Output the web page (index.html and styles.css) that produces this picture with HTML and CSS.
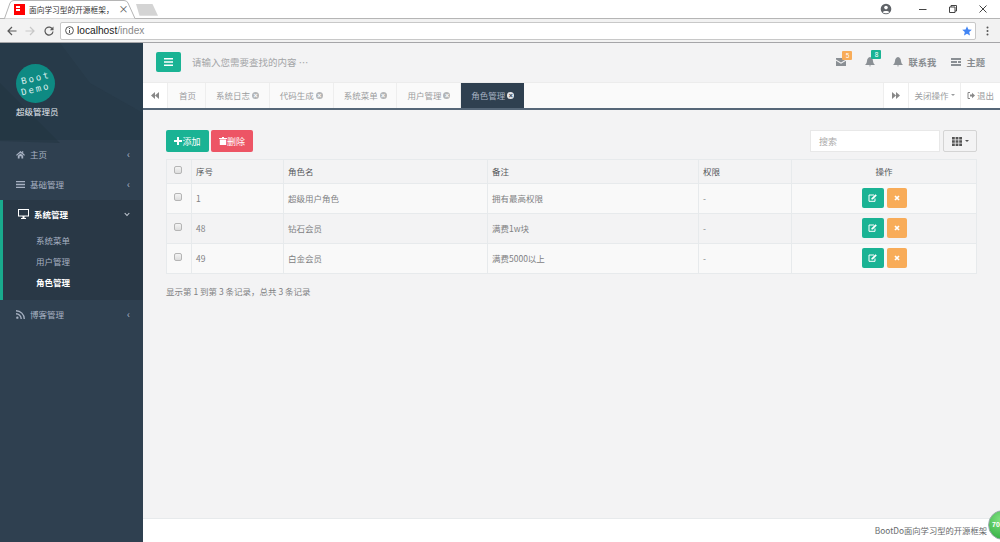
FILE: index.html
```html
<!DOCTYPE html>
<html lang="zh">
<head>
<meta charset="utf-8">
<title>BootDo</title>
<link rel="stylesheet" href="styles.css">
</head>
<body>
<div class="browser">
  <div class="tabstrip">
    <svg class="tab-shape" width="160" height="19" viewBox="0 0 160 19"><path d="M0 18.500H4.500L10 3Q11 .5 14 .5H124Q127 .5 128 3L135 18.500" fill="#fff" stroke="#b5b5b5"/><path d="M136 4H152.500L158 15.700H139.500Z" fill="#d4d4d4"/></svg>
    <div class="favicon"><i></i></div>
    <span class="tab-title">面向学习型的开源框架，</span>
    <span class="tab-close">×</span>
    <div class="winctl">
      <svg class="ico-user" width="12" height="12" viewBox="0 0 12 12"><circle cx="6" cy="6" r="5.300" fill="#5f6368"/><circle cx="6" cy="4.600" r="1.800" fill="#fff"/><path d="M2.700 9.200C3.500 7.500 8.500 7.500 9.300 9.200 8 10.500 4 10.500 2.700 9.200Z" fill="#fff"/></svg>
      <svg class="ico-win" width="8" height="8" viewBox="0 0 8 8"><path d="M0 4.500H7.500" stroke="#444" fill="none"/></svg>
      <svg class="ico-win" width="8" height="8" viewBox="0 0 8 8"><path d="M.5 2H6V7.500H.5ZM2 2V.5H7.500V6H6" stroke="#444" fill="none"/></svg>
      <svg class="ico-win" width="8" height="8" viewBox="0 0 8 8"><path d="M.5.500L7.500 7.500M7.500.500L.5 7.500" stroke="#444" fill="none"/></svg>
    </div>
  </div>
  <div class="toolbar">
    <svg class="nav-ico" width="10" height="10" viewBox="0 0 10 10"><path d="M9.500 5H1M5 1L1 5L5 9" stroke="#5a5a5a" stroke-width="1.200" fill="none"/></svg>
    <svg class="nav-ico" width="10" height="10" viewBox="0 0 10 10"><path d="M.5 5H9M5 1L9 5L5 9" stroke="#c8c8c8" stroke-width="1.200" fill="none"/></svg>
    <svg class="nav-ico" width="10" height="10" viewBox="0 0 10 10"><path d="M8.700 3.500A4 4 0 1 0 9 5.500" stroke="#5a5a5a" stroke-width="1.200" fill="none"/><path d="M9.500.5V4.200H5.800Z" fill="#5a5a5a"/></svg>
    <div class="omnibox">
      <svg width="9" height="9" viewBox="0 0 9 9"><circle cx="4.500" cy="4.500" r="3.900" stroke="#555" fill="none"/><path d="M4.500 4V7M4.500 2V3" stroke="#555"/></svg>
      <span class="url"><b>localhost</b>/index</span>
      <svg class="star" width="10" height="10" viewBox="0 0 10 10"><path d="M5 .3L6.400 3.500 9.800 3.800 7.200 6.100 8 9.600 5 7.800 2 9.600 2.800 6.100 .2 3.800 3.600 3.500Z" fill="#4285f4"/></svg>
    </div>
    <svg class="menu-dots" width="3" height="10" viewBox="0 0 3 10"><circle cx="1.500" cy="1.500" r="1" fill="#555"/><circle cx="1.500" cy="5" r="1" fill="#555"/><circle cx="1.500" cy="8.500" r="1" fill="#555"/></svg>
  </div>
</div>

<div class="app">
  <aside class="sidebar">
    <svg class="side-deco" width="143" height="260" viewBox="0 0 143 260"><path d="M60 0H143V70L90 40Z" fill="#2c4050" opacity=".55"/><path d="M0 40L60 100 0 98Z" fill="#22333f" opacity=".5"/></svg>
    <div class="profile">
      <div class="logo"><span>Boot</span><span>Demo</span></div>
      <div class="role">超级管理员</div>
    </div>
    <nav class="nav">
      <a class="nav-item">
        <svg class="nav-i" width="9" height="9" viewBox="0 0 10 10"><path d="M5 1L0 5.500 1 6.500 5 3 9 6.500 10 5.500 8 3.700V1H7V2.800ZM2 6.500L5 4 8 6.500V9.500H6V7H4V9.500H2Z" fill="#a7b1c2"/></svg>
        <span>主页</span><em>‹</em>
      </a>
      <a class="nav-item">
        <svg class="nav-i" width="9" height="9" viewBox="0 0 10 10"><path d="M0 1H10V2.600H0ZM0 4.200H10V5.800H0ZM0 7.400H10V9H0Z" fill="#a7b1c2"/></svg>
        <span>基础管理</span><em>‹</em>
      </a>
      <div class="nav-group">
        <a class="nav-item active">
          <svg class="nav-i" width="11" height="10" viewBox="0 0 11 10"><path d="M0 0H11V7.500H6.500V9H8V10H3V9H4.500V7.500H0ZM1 1V6.500H10V1Z" fill="#fff"/></svg>
          <span>系统管理</span><svg class="chev" width="6" height="5" viewBox="0 0 6 5"><path d="M.7 1L3 3.500 5.300 1" stroke="#c5ccd6" stroke-width="1.100" fill="none"/></svg>
        </a>
        <a class="sub">系统菜单</a>
        <a class="sub">用户管理</a>
        <a class="sub current">角色管理</a>
      </div>
      <a class="nav-item">
        <svg class="nav-i" width="9" height="9" viewBox="0 0 10 10"><circle cx="1.500" cy="8.500" r="1.300" fill="#a7b1c2"/><path d="M0 4.200A5.800 5.800 0 0 1 5.800 10M0 .8A9.200 9.200 0 0 1 9.200 10" stroke="#a7b1c2" stroke-width="1.500" fill="none"/></svg>
        <span>博客管理</span><em>‹</em>
      </a>
    </nav>
  </aside>

  <main class="main">
    <header class="topbar">
      <button class="burger"><svg width="9" height="8" viewBox="0 0 9 8"><path d="M0 0H9V1.600H0ZM0 3.200H9V4.800H0ZM0 6.400H9V8H0Z" fill="#fff"/></svg></button>
      <span class="search-hint">请输入您需要查找的内容 …</span>
      <div class="top-actions">
        <div class="top-ico">
          <svg width="10" height="8" viewBox="0 0 10 8"><path d="M0 0H10V1.500L5 4.500 0 1.500ZM0 2.800L5 5.800 10 2.800V8H0Z" fill="#8a8f94"/></svg>
          <b class="badge orange">5</b>
        </div>
        <div class="top-ico">
          <svg width="10" height="10" viewBox="0 0 10 10"><path d="M5 0C7 .6 7.800 2 8 4 8.200 6 9 7 10 8H0C1 7 1.800 6 2 4 2.200 2 3 .6 5 0ZM4 8.500H6Q5 10.500 4 8.500Z" fill="#8a8f94"/></svg>
          <b class="badge green">8</b>
        </div>
        <div class="top-link">
          <svg width="10" height="10" viewBox="0 0 10 10"><path d="M5 0C7 .6 7.800 2 8 4 8.200 6 9 7 10 8H0C1 7 1.800 6 2 4 2.200 2 3 .6 5 0ZM4 8.500H6Q5 10.500 4 8.500Z" fill="#8a8f94"/></svg>
          <span>联系我</span>
        </div>
        <div class="top-link">
          <svg width="10" height="8" viewBox="0 0 10 8"><path d="M0 0H10V2H0ZM0 3H6V5H0ZM7 3H10V5H7ZM0 6H10V8H0Z" fill="#8a8f94"/></svg>
          <span>主题</span>
        </div>
      </div>
    </header>

    <div class="tabs">
      <div class="tab-btn arrow"><svg width="8" height="7" viewBox="0 0 8 7"><path d="M4 0V7L0 3.500ZM8 0V7L4 3.500Z" fill="#888"/></svg></div>
      <div class="page-tab">首页</div>
      <div class="page-tab">系统日志<i class="x">×</i></div>
      <div class="page-tab">代码生成<i class="x">×</i></div>
      <div class="page-tab">系统菜单<i class="x">×</i></div>
      <div class="page-tab">用户管理<i class="x">×</i></div>
      <div class="page-tab on">角色管理<i class="x">×</i></div>
      <div class="tab-spacer"></div>
      <div class="tab-btn arrow r"><svg width="8" height="7" viewBox="0 0 8 7"><path d="M0 0V7L4 3.500ZM4 0V7L8 3.500Z" fill="#888"/></svg></div>
      <div class="tab-btn close-ops">关闭操作<i class="caret"></i></div>
      <div class="tab-btn logout"><svg width="8" height="7" viewBox="0 0 8 7"><path d="M3 .5H1V6.500H3" stroke="#888" fill="none"/><path d="M3 2.500H5V.8L8 3.500 5 6.200V4.500H3Z" fill="#888"/></svg>退出</div>
    </div>

    <section class="content">
      <div class="table-tools">
        <button class="btn add"><svg width="8" height="8" viewBox="0 0 8 8"><path d="M3 0H5V3H8V5H5V8H3V5H0V3H3Z" fill="#fff"/></svg>添加</button>
        <button class="btn del"><svg width="8" height="8" viewBox="0 0 8 8"><path d="M3 0H5V1H8V2H0V1H3ZM.8 2.500H7.200V8H.8Z" fill="#fff"/></svg>删除</button>
        <div class="tools-right">
          <div class="search-box">搜索</div>
          <button class="cols"><svg width="10" height="9" viewBox="0 0 10 9"><path d="M0 0H2.800V2.500H0ZM3.600 0H6.400V2.500H3.600ZM7.200 0H10V2.500H7.200ZM0 3.250H2.800V5.750H0ZM3.600 3.250H6.400V5.750H3.600ZM7.200 3.250H10V5.750H7.200ZM0 6.500H2.800V9H0ZM3.600 6.500H6.400V9H3.600ZM7.200 6.500H10V9H7.200Z" fill="#555"/></svg><i class="caret dark"></i></button>
        </div>
      </div>
      <div class="grid-table">
        <div class="row head">
          <div class="cell"><i class="check"></i></div><div class="cell">序号</div><div class="cell">角色名</div><div class="cell">备注</div><div class="cell">权限</div><div class="cell center">操作</div>
        </div>
        <div class="row">
          <div class="cell"><i class="check"></i></div><div class="cell">1</div><div class="cell">超级用户角色</div><div class="cell">拥有最高权限</div><div class="cell">-</div>
          <div class="cell center"><button class="act edit"><svg width="9" height="8" viewBox="0 0 9 8"><path d="M6 1H1V7.300H7V4.500" stroke="#fff" fill="none"/><path d="M3.500 4.200L7.500.2 8.800 1.500 4.800 5.500H3.500Z" fill="#fff"/></svg></button><button class="act remove"><svg width="6" height="6" viewBox="0 0 6 6"><path d="M1 1L5 5M5 1L1 5" stroke="#fff" stroke-width="1.700"/></svg></button></div>
        </div>
        <div class="row alt">
          <div class="cell"><i class="check"></i></div><div class="cell">48</div><div class="cell">钻石会员</div><div class="cell">满费1w块</div><div class="cell">-</div>
          <div class="cell center"><button class="act edit"><svg width="9" height="8" viewBox="0 0 9 8"><path d="M6 1H1V7.300H7V4.500" stroke="#fff" fill="none"/><path d="M3.500 4.200L7.500.2 8.800 1.500 4.800 5.500H3.500Z" fill="#fff"/></svg></button><button class="act remove"><svg width="6" height="6" viewBox="0 0 6 6"><path d="M1 1L5 5M5 1L1 5" stroke="#fff" stroke-width="1.700"/></svg></button></div>
        </div>
        <div class="row">
          <div class="cell"><i class="check"></i></div><div class="cell">49</div><div class="cell">白金会员</div><div class="cell">满费5000以上</div><div class="cell">-</div>
          <div class="cell center"><button class="act edit"><svg width="9" height="8" viewBox="0 0 9 8"><path d="M6 1H1V7.300H7V4.500" stroke="#fff" fill="none"/><path d="M3.500 4.200L7.500.2 8.800 1.500 4.800 5.500H3.500Z" fill="#fff"/></svg></button><button class="act remove"><svg width="6" height="6" viewBox="0 0 6 6"><path d="M1 1L5 5M5 1L1 5" stroke="#fff" stroke-width="1.700"/></svg></button></div>
        </div>
      </div>
      <p class="summary">显示第 1 到第 3 条记录，总共 3 条记录</p>
    </section>

    <footer class="footer">BootDo面向学习型的开源框架</footer>
    <div class="speed">70</div>
  </main>
</div>
</body>
</html>
```
FILE: styles.css
```css
* { box-sizing: border-box; }
html, body { margin: 0; height: 100%; overflow: hidden; }
body {
  width: 1000px; height: 542px;
  font-family: "Noto Sans CJK SC", "Liberation Sans", sans-serif;
  font-size: 8.500px; color: #676a6c;
  display: flex; flex-direction: column;
  background: #f3f3f4;
}
svg { display: block; flex: none; }
button { border: 0; padding: 0; font: inherit; }

/* browser chrome */
.browser { height: 43px; flex: none; border-bottom: 1px solid #a5a5a8; background: #f2f2f2; }
.tabstrip { height: 19px; background: #fff; border-bottom: 1px solid #b5b5b5; position: relative; display: flex; align-items: center; padding-left: 14px; }
.tab-shape { position: absolute; left: 0; top: 0; }
.favicon { position: relative; width: 11px; height: 11px; background: #f00; }
.favicon i { position: absolute; left: 2px; top: 2px; width: 4px; height: 2px; background: #fff; box-shadow: 0 3px 0 #fff; }
.tab-title { position: relative; margin-left: 4px; font-size: 7.700px; color: #333; white-space: nowrap; }
.tab-close { position: relative; margin-left: 5px; font-size: 10px; line-height: 1; color: #555; }
.winctl { margin-left: auto; display: flex; align-items: center; gap: 22px; padding-right: 13px; }
.ico-user { margin-right: 5px; }
.toolbar { height: 23px; display: flex; align-items: center; padding-left: 7px; }
.nav-ico { margin-right: 8px; }
.nav-ico:nth-child(2) { margin-right: 9px; }
.nav-ico:nth-child(3) { margin-right: 6px; }
.omnibox { width: 916px; height: 18px; background: #fff; border: 1px solid #c8c8c8; border-radius: 2px; display: flex; align-items: center; padding: 0 3px 0 4px; gap: 3px; }
.url { font-family: "Liberation Sans", sans-serif; font-size: 10.200px; color: #8a8a8a; }
.url b { font-weight: 400; color: #222; }
.star { margin-left: auto; }
.menu-dots { margin-left: 10px; }

/* layout */
.app { flex: 1; display: flex; min-height: 0; }
.sidebar { width: 143px; flex: none; background: #2f4050; position: relative; overflow: hidden; }
.side-deco { position: absolute; left: 0; top: 0; }
.profile { height: 97px; background: #273a49; padding: 21px 0 0 16px; }
.logo { position: relative; width: 39px; height: 39px; border-radius: 50%; background: #0e8a83; color: #dcefee; font-family: "DejaVu Sans Mono", monospace; font-size: 9px; line-height: 11px; display: flex; flex-direction: column; align-items: center; justify-content: center; letter-spacing: 2px; }
.logo span { transform: rotate(-14deg); display: block; }
.role { position: relative; margin-top: 2px; color: #e6ebf2; font-size: 8.500px; line-height: 12px; }
.nav { position: relative; display: flex; flex-direction: column; }
.nav-item { height: 30px; display: flex; align-items: center; padding: 0 13px 2px 16px; color: #a7b1c2; gap: 5px; }
.nav-item em { margin-left: auto; font-style: normal; font-size: 10px; line-height: 1; }
.nav-group { background: #293846; border-left: 3px solid #19aa8d; height: 100px; }
.nav-item.active { height: 30px; color: #fff; font-weight: 700; padding-left: 15px; }
.chev { margin-left: auto; }
.sub { display: block; height: 21px; line-height: 21px; padding-left: 33px; color: #a7b1c2; }
.sub.current { color: #fff; font-weight: 700; }

.main { flex: 1; min-width: 0; display: flex; flex-direction: column; position: relative; }
.topbar { height: 39px; flex: none; display: flex; align-items: center; padding: 0 15px 2px 13px; background: #f3f3f4; }
.burger { width: 25px; height: 20px; background: #1ab394; border-radius: 2px; display: flex; align-items: center; justify-content: center; }
.search-hint { margin-left: 11px; font-size: 9.500px; color: #a3a5a7; }
.top-actions { margin-left: auto; display: flex; align-items: center; }
.top-ico { position: relative; margin-right: 19px; }
.top-ico:nth-child(2) { margin-right: 18px; }
.badge { position: absolute; left: 6px; top: -7px; min-width: 10px; height: 9px; padding: 0 2px; border-radius: 1px; color: #fff; font-size: 6.500px; font-weight: 400; line-height: 9px; text-align: center; font-family: "Liberation Sans", sans-serif; }
.orange { background: #f8ac59; }
.green { background: #1ab394; }
.top-link { display: flex; align-items: center; gap: 5px; font-size: 9.300px; font-weight: 700; color: #888c90; }
.top-link:nth-child(3) { margin-right: 15px; }

.tabs { height: 28px; flex: none; display: flex; background: #fafafa; border-top: 1px solid #ececec; border-bottom: 2px solid #566778; }
.tab-btn { display: flex; align-items: center; justify-content: center; padding-bottom: 1px; background: #fff; color: #9a9c9e; border-right: 1px solid #eee; }
.arrow { width: 25px; }
.arrow.r { width: 26px; border-left: 1px solid #eee; border-right: 1px solid #eee; }
.close-ops { width: 52px; gap: 2px; }
.logout { width: 39px; gap: 2px; border-right: 0; }
.page-tab { display: flex; align-items: center; padding: 0 9.800px 1px 10px; color: #9a9c9e; border-right: 1px solid #eee; white-space: nowrap; }
.page-tab:nth-child(2) { padding: 0 9px 1px 11px; }
.page-tab.on { background: #2f4050; color: #a7b1c2; border-right: 0; }
.x { width: 7px; height: 7px; margin-left: 2px; border-radius: 50%; background: #b3b5b7; color: #fff; font-style: normal; font-size: 7px; line-height: 7px; text-align: center; font-family: "Liberation Sans", sans-serif; font-weight: 700; }
.on .x { background: #e4e7ea; color: #2f4050; }
.tab-spacer { flex: 1; }
.caret { display: inline-block; width: 0; height: 0; border: 2px solid transparent; border-top: 2.500px solid #9a9c9e; border-bottom: 0; }
.caret.dark { border-top-color: #555; margin-left: 3px; }

.content { flex: 1; min-height: 0; padding: 20px 23px 0; display: flex; flex-direction: column; }
.table-tools { display: flex; align-items: center; height: 22px; gap: 2px; margin-bottom: 7px; }
.btn { height: 22px; border-radius: 2px; color: #fff; display: flex; align-items: center; justify-content: center; font-size: 9px; }
.add { width: 43px; background: #1ab394; }
.del { width: 42px; background: #ed5565; }
.tools-right { margin-left: auto; display: flex; gap: 3px; }
.search-box { width: 130px; height: 22px; padding-left: 8px; line-height: 21px; font-size: 9px; color: #aaa; background: #fff; border: 1px solid #e8e8e8; }
.cols { width: 34px; height: 22px; display: flex; align-items: center; justify-content: center; background: #f3f3f4; border: 1px solid #d4d4d4; border-radius: 2px; }
.grid-table { border: 1px solid #e7eaec; background: #f9f9f9; flex: none; }
.row { display: grid; grid-template-columns: 24px 92px 204px 211px 93px 1fr; height: 30px; border-top: 1px solid #e7eaec; }
.row.head { height: 23px; border-top: 0; background: #f3f3f4; color: #5e6163; }
.row.alt { background: #f3f3f4; }
.cell { display: flex; align-items: center; padding: 0 0 1px 4px; border-left: 1px solid #e7eaec; color: #7f8183; }
.head .cell { color: #55585a; }
.cell:first-child { border-left: 0; padding: 0 0 4px 7px; }
.cell.center { justify-content: center; padding-left: 0; gap: 3px; }
.check { width: 8px; height: 8px; border: 1px solid #b5b5b5; border-radius: 2px; background: linear-gradient(#f4f4f4, #ddd); }
.act { height: 20px; border-radius: 2px; display: flex; align-items: center; justify-content: center; }
.edit { width: 22px; background: #1ab394; }
.remove { width: 20px; background: #f8ac59; }
.summary { margin: 11px 0 0; color: #7f8183; }

.footer { height: 24px; flex: none; background: #fff; border-top: 1px solid #e7eaec; text-align: right; padding: 5px 13px 0 0; font-size: 8.300px; line-height: 13px; color: #676a6c; white-space: nowrap; }
.speed { position: absolute; left: 845px; top: 467px; width: 30px; height: 30px; border-radius: 50%; background: radial-gradient(circle at 40% 30%, #7fe07f, #3cb54a 70%); border: 1px solid #9aa; color: #fff; font-size: 7px; font-weight: 700; line-height: 28px; padding-left: 3px; font-family: "Liberation Sans", sans-serif; }
```
